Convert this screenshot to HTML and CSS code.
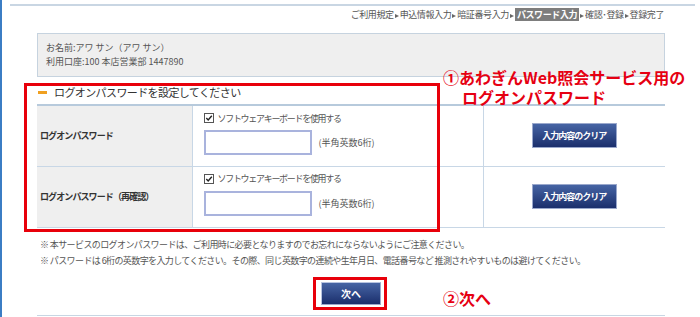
FILE: index.html
```html
<html>
<head>
  <meta charset="utf-8">
  <title>ログオンパスワード設定</title>
  <link rel="stylesheet" href="styles.css">
</head>
<body>
  <div class="frame">
    <div class="topline"></div>
    <div class="content">
      <div class="steps">ご利用規定<span class="arr"></span>申込情報入力<span class="arr"></span>暗証番号入力<span class="arr"></span><span class="current">パスワード入力</span><span class="arr"></span>確認･登録<span class="arr"></span>登録完了</div>

      <div class="info">
        <p>お名前:アワ サン（アワ サン）</p>
        <p>利用口座:100 本店営業部 1447890</p>
      </div>

      <h3 class="sec"><span class="dash"></span>ログオンパスワードを設定してください</h3>

      <table class="form">
        <tr>
          <td class="label">ログオンパスワード</td>
          <td class="field">
            <div class="kb">
              <svg width="10" height="10" viewBox="0 0 10 10"><rect x="0.5" y="0.5" width="9" height="9" fill="#fff" stroke="#555"/><path d="M2.3 5 L4.2 7 L7.8 2.8" fill="none" stroke="#222" stroke-width="1.4"/></svg>
              <span>ソフトウェアキーボードを使用する</span>
            </div>
            <div class="pw"><input type="password"><span>(半角英数6桁)</span></div>
          </td>
          <td class="action"><button class="btn">入力内容のクリア</button></td>
        </tr>
        <tr>
          <td class="label">ログオンパスワード（再確認）</td>
          <td class="field">
            <div class="kb">
              <svg width="10" height="10" viewBox="0 0 10 10"><rect x="0.5" y="0.5" width="9" height="9" fill="#fff" stroke="#555"/><path d="M2.3 5 L4.2 7 L7.8 2.8" fill="none" stroke="#222" stroke-width="1.4"/></svg>
              <span>ソフトウェアキーボードを使用する</span>
            </div>
            <div class="pw"><input type="password"><span>(半角英数6桁)</span></div>
          </td>
          <td class="action"><button class="btn">入力内容のクリア</button></td>
        </tr>
      </table>

      <ul class="notes">
        <li>※ 本サービスのログオンパスワードは、ご利用時に必要となりますのでお忘れにならないようにご注意ください。</li>
        <li>※ パスワードは 6桁の英数字を入力してください。その際、同じ英数字の連続や生年月日、電話番号など 推測されやすいものは避けてください。</li>
      </ul>

      <div class="next"><button class="btn-next">次へ</button></div>
      <div class="bottomline"></div>
    </div>

    <!-- 注釈 -->
    <div class="mark box1"></div>
    <div class="mark box2"></div>
    <div class="callout call1">
      <div>①あわぎんWeb照会サービス用の</div>
      <div class="indent">ログオンパスワード</div>
    </div>
    <div class="callout call2">②次へ</div>
  </div>
</body>
</html>
```

FILE: styles.css
```css
* {
  box-sizing: border-box;
}

body {
  margin: 0;
  font-family: "Noto Sans CJK JP", "Noto Sans", sans-serif;
  color: #555;
  background: #fff;
}

.frame {
  position: relative;
  height: 317px;
  overflow: hidden;
  border-left: 2px solid #3b7dc4;
}

.topline {
  margin: 4px 0 0 8px;
  width: 685px;
  height: 2px;
  background: #c9d6e3;
}

.content {
  width: 628px;
  margin-left: 35px;
}

/* 進行ステップ */
.steps {
  margin-top: 3px;
  height: 12px;
  line-height: 12px;
  text-align: right;
  font-size: 9px;
  letter-spacing: -0.4px;
  color: #555;
  padding-right: 1px;
}

.steps .arr {
  display: inline-block;
  width: 0;
  height: 0;
  border-left: 4px solid #666;
  border-top: 2.5px solid transparent;
  border-bottom: 2.5px solid transparent;
  margin: 0 1px;
  vertical-align: middle;
}

.steps .current {
  background: #7d7d7d;
  color: #fff;
  font-weight: bold;
  padding: 0 2px;
}

.info {
  margin-top: 12px;
  border: 1px solid #c6d3df;
  background: #efefef;
  padding: 7px 8px;
}

.info p {
  margin: 0;
  font-size: 9px;
  line-height: 14px;
}

.sec {
  display: flex;
  align-items: center;
  margin: 8px 0 5px;
  font-size: 11px;
  line-height: 14px;
  font-weight: normal;
  letter-spacing: -0.6px;
  color: #333;
}

.sec .dash {
  width: 9px;
  height: 3px;
  background: #f0a020;
  margin: 0 7px 0 1px;
}

/* 入力テーブル */
.form {
  width: 628px;
  border-collapse: collapse;
  border-top: 2px solid #b7cadc;
}

.form td {
  height: 61px;
  padding: 0;
  border-bottom: 1px solid #c8d7e6;
}

.form .label {
  width: 155px;
  background: #efefef;
  border-right: 1px solid #c8d7e6;
  padding-left: 3px;
  font-size: 9px;
  font-weight: bold;
  letter-spacing: -0.9px;
  color: #333;
}

.form .field {
  width: 291px;
  vertical-align: top;
  padding: 6px 0 0 11px;
  border-right: 1px solid #c8d7e6;
}

.form .action {
  text-align: center;
}

.kb {
  display: flex;
  align-items: center;
  gap: 4px;
  height: 12px;
  font-size: 9px;
  letter-spacing: -1.3px;
  color: #555;
}

.pw {
  display: flex;
  align-items: center;
  gap: 7px;
  margin-top: 6px;
  font-size: 9px;
}

.pw input {
  width: 108px;
  height: 25px;
  margin: 0;
  border: 2px solid #a9b3dd;
  background: #fff;
}

.btn, .btn-next {
  font-family: inherit;
  color: #fff;
  font-weight: bold;
  border: 1px solid #9aa8cc;
  background: linear-gradient(#4664a4, #1b2f6c);
  padding: 0;
}

.btn {
  width: 85px;
  height: 25px;
  font-size: 9px;
  letter-spacing: -1px;
}

.notes {
  list-style: none;
  margin: 9px 0 0;
  padding: 0 0 0 3px;
  font-size: 9px;
  line-height: 16px;
  letter-spacing: -0.6px;
  color: #555;
}

.next {
  display: flex;
  justify-content: center;
  margin-top: 13px;
}

.btn-next {
  width: 60px;
  height: 23px;
  font-size: 10px;
  border-left-color: #b8c4e0;
  border-top-color: #b8c4e0;
}

.bottomline {
  margin-top: 10px;
  height: 1px;
  background: #c8d6e3;
}

/* 注釈 */
.mark {
  position: absolute;
  border: 3px solid #e8000a;
}

.box1 {
  left: 22px;
  top: 83px;
  width: 416px;
  height: 149px;
}

.box2 {
  left: 311px;
  top: 277px;
  width: 74px;
  height: 33px;
}

.callout {
  position: absolute;
  color: #e60012;
  font-size: 16px;
  font-weight: bold;
  line-height: 20px;
  white-space: nowrap;
}

.callout div {
  height: 20px;
}

.call1 {
  left: 441px;
  top: 67px;
}

.call1 .indent {
  padding-left: 19px;
}

.call2 {
  left: 441px;
  top: 288px;
}
```
